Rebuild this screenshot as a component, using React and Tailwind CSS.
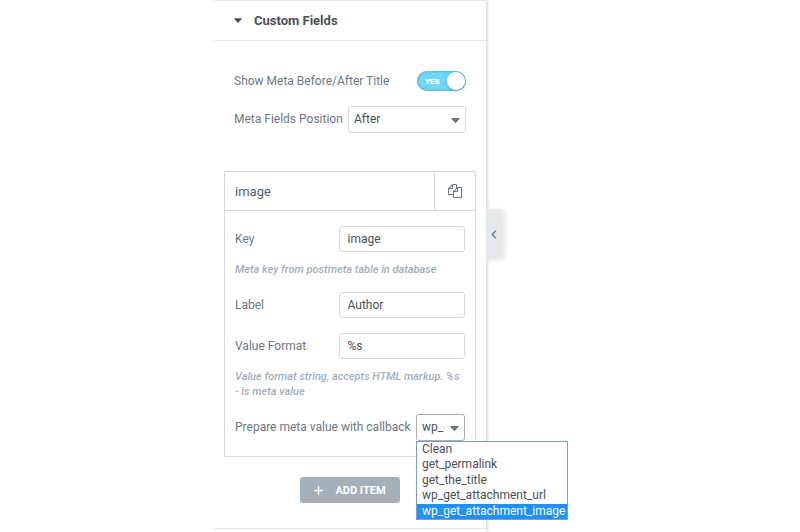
import React, { useState } from 'react';

const callbacks = [
  'Clean',
  'get_permalink',
  'get_the_title',
  'wp_get_attachment_url',
  'wp_get_attachment_image',
];

function Caret({ className }) {
  return (
    <svg className={className} width="9" height="5" viewBox="0 0 9 5" fill="currentColor" aria-hidden="true">
      <path d="M0.6 0h7.8q0.8 0 0.2 0.8L5 4.7q-0.5 0.5-1 0L0.4 0.8Q-0.2 0 0.6 0z" />
    </svg>
  );
}

function TextField({ id, label, value, onChange }) {
  return (
    <div className="flex items-center justify-between">
      <label htmlFor={id}>{label}</label>
      <input
        id={id}
        type="text"
        value={value}
        onChange={(e) => onChange(e.target.value)}
        className="h-[26px] w-[55%] rounded-[3px] border border-[#d5dadf] bg-white px-2 text-[#495157] outline-none"
      />
    </div>
  );
}

export default function App() {
  const [enabled, setEnabled] = useState(true);
  const [position, setPosition] = useState('After');
  const [metaKey, setMetaKey] = useState('image');
  const [label, setLabel] = useState('Author');
  const [format, setFormat] = useState('%s');
  const [callback, setCallback] = useState('wp_get_attachment_image');

  return (
    <div className="grid min-h-screen grid-cols-[214fr_272fr_314fr] overflow-hidden bg-white font-['Roboto',sans-serif] text-[12px] leading-[15px] text-[#6d7882]">
      <section className="relative col-start-2 border-t border-[#e6e9ec] shadow-[1px_0_4px_rgba(0,0,0,0.2)] [clip-path:inset(0_-100vw_0_0)]">
        <button type="button" className="flex h-10 w-full items-center gap-3 border-b border-[#e6e9ec] px-5 text-[13px] font-bold text-[#495157]">
          <Caret className="h-[5px] w-2" />
          Custom Fields
        </button>

        {/* Section controls */}
        <div className="px-5 pt-[30px]">
          <div className="flex items-center justify-between">
            <label htmlFor="show-meta">Show Meta Before/After Title</label>
            <span className="relative flex h-5 w-[49px] items-center rounded-full bg-[#71d7f7] shadow-[inset_0_0_3px_#4599b5]">
              <input
                id="show-meta"
                type="checkbox"
                checked={enabled}
                onChange={() => setEnabled(!enabled)}
                className="absolute inset-0 z-10 cursor-pointer opacity-0"
              />
              <span className="flex-1 pl-2 text-[8px] font-black text-white">{enabled ? 'YES' : 'NO'}</span>
              <span className="mr-px size-[18px] rounded-full bg-white shadow-[0_2px_4px_rgba(0,0,0,0.15)]"></span>
            </span>
          </div>
          <div className="mt-[15px] flex items-center justify-between gap-1">
            <label htmlFor="position">Meta Fields Position</label>
            <span className="relative w-[118px]">
              <select
                id="position"
                value={position}
                onChange={(e) => setPosition(e.target.value)}
                className="block h-[27px] w-full appearance-none rounded-[3px] border border-[#d5dadf] bg-white pr-5 pl-[5px] text-[#495157] outline-none"
              >
                <option>Before</option>
                <option>After</option>
              </select>
              <Caret className="pointer-events-none absolute top-3 right-1.5" />
            </span>
          </div>
        </div>

        {/* Repeater item */}
        <div className="mx-2.5 mt-[38px] border border-[#d5dadf]">
          <div className="flex h-[39px] border-b border-[#d5dadf] text-[#556068]">
            <button type="button" className="flex-1 px-2.5 text-left text-[13px]">{metaKey}</button>
            <button type="button" aria-label="Duplicate" className="flex w-[41px] items-center justify-center border-l border-[#d5dadf] text-[#6d7882]">
              <svg width="14" height="14" viewBox="0 0 1792 1792" fill="currentColor">
                <path d="M1696 384q40 0 68 28t28 68v1216q0 40-28 68t-68 28h-960q-40 0-68-28t-28-68v-288h-544q-40 0-68-28t-28-68v-672q0-40 20-88t48-76l408-408q28-28 76-48t88-20h416q40 0 68 28t28 68v328q68-40 128-40h416zm-544 213l-299 299h299v-299zm-640-384l-299 299h299v-299zm196 647l316-316v-416h-384v416q0 40-28 68t-68 28h-416v640h512v-256q0-40 20-88t48-76zm956 804v-1152h-384v416q0 40-28 68t-68 28h-416v640h896z" />
              </svg>
            </button>
          </div>
          <div className="px-2.5 py-[15px]">
            <TextField id="meta-key" label="Key" value={metaKey} onChange={setMetaKey} />
            <p className="mt-2.5 mb-[15px] text-[11px] font-medium text-[#a4afb7] italic">Meta key from postmeta table in database</p>
            <TextField id="meta-label" label="Label" value={label} onChange={setLabel} />
            <div className="mt-[15px]">
              <TextField id="meta-format" label="Value Format" value={format} onChange={setFormat} />
            </div>
            <p className="mt-2.5 mb-[15px] text-[11px] font-medium text-[#a4afb7] italic">
              Value format string, accepts HTML markup. %s - is meta value
            </p>
            <div className="flex items-center justify-between">
              <label htmlFor="callback" className="whitespace-nowrap">Prepare meta value with callback</label>
              <span className="relative w-[49px] shrink-0">
                <select
                  id="callback"
                  value={callback}
                  onChange={(e) => setCallback(e.target.value)}
                  className="block h-[27px] w-full appearance-none rounded-[3px] border border-[#a4afb7] bg-white pr-5 pl-[5px] text-[#495157] outline-none"
                >
                  {callbacks.map((name) => (
                    <option key={name}>{name}</option>
                  ))}
                </select>
                <Caret className="pointer-events-none absolute top-3 right-1.5" />
                <ul role="listbox" aria-label="Callback" className="absolute top-full left-0 z-20 flex h-[79px] w-[152px] flex-col border border-[#7a9cd3] bg-white text-[#495157]">
                  {callbacks.map((name) => (
                    <li
                      key={name}
                      role="option"
                      aria-selected={name === callback}
                      onClick={() => setCallback(name)}
                      className="flex-1 pl-[5px] leading-[15px] whitespace-nowrap aria-selected:bg-[#1e90ff] aria-selected:text-white"
                    >
                      {name}
                    </li>
                  ))}
                </ul>
              </span>
            </div>
          </div>
        </div>

        <div className="flex justify-center border-b border-[#e6e9ec] pt-5 pb-[25px]">
          <button type="button" className="flex h-[26px] w-[100px] items-center justify-center gap-3 rounded-[3px] bg-[#a4afb7] text-[11px] font-bold text-white">
            <svg width="9" height="9" viewBox="0 0 9 9" stroke="currentColor" strokeWidth="1.4" aria-hidden="true">
              <path d="M4.5 0v9M0 4.5h9" />
            </svg>
            ADD ITEM
          </button>
        </div>

        {/* Panel collapse handle */}
        <button type="button" aria-label="Collapse panel" className="absolute top-52 left-full flex h-[50px] w-4 items-center justify-center bg-[#e6e9ec] shadow-[3px_1px_5px_rgba(0,0,0,0.1)]">
          <svg width="6" height="9" viewBox="0 0 6 9" fill="none" stroke="currentColor" strokeWidth="1.3">
            <path d="M5 0.7L1.2 4.5L5 8.3" />
          </svg>
        </button>
      </section>
    </div>
  );
}
